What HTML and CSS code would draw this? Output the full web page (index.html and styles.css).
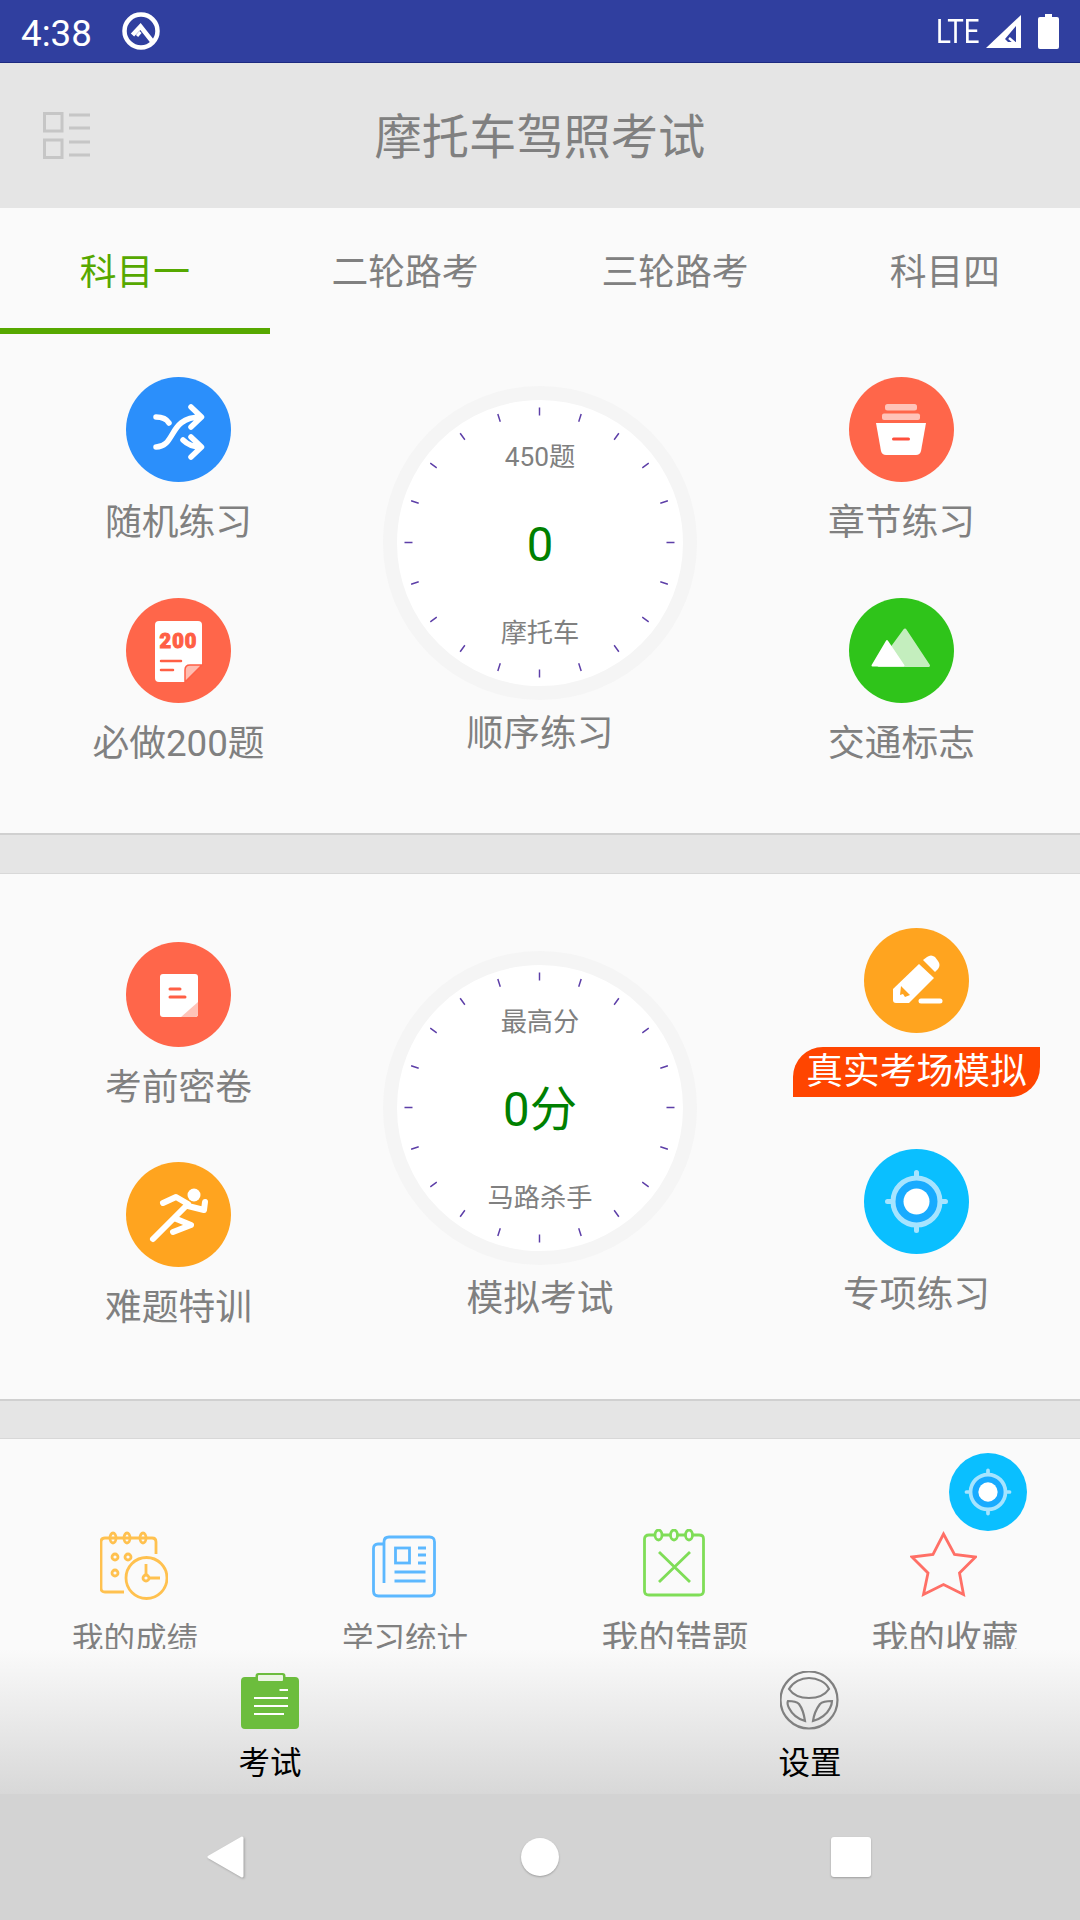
FILE: index.html
```html
<!DOCTYPE html>
<html lang="zh-CN">
<head>
  <meta charset="UTF-8">
  <meta name="viewport" content="width=device-width, initial-scale=1.0">
  <title>摩托车驾照考试</title>
  <link rel="stylesheet" href="styles.css">
</head>
<body>
  <svg class="defs" width="0" height="0">
    <symbol id="target" viewBox="0 0 105 105">
      <circle cx="52.5" cy="52.5" r="52.5" fill="#0abfff"/>
      <circle cx="52.5" cy="52.5" r="22" fill="#18abff"/>
      <circle cx="52.5" cy="52.5" r="23.500" fill="none" stroke="#a6e4ff" stroke-width="5"/>
      <path d="M52.5 23.500v3M52.5 78.500v3M23.500 52.5h3M78.500 52.5h3" stroke="#a6e4ff" stroke-width="5" stroke-linecap="round"/>
      <circle cx="52.5" cy="52.5" r="13" fill="#fff"/>
    </symbol>
  </svg>

  <div class="phone">
    <!-- Status bar -->
    <div class="status">
      <span class="time">4:38</span>
      <svg class="q-icon" viewBox="0 0 38 38" fill="none" stroke="#fff">
        <circle cx="19" cy="19" r="16.5" stroke-width="4.5"/>
        <path d="M10.500 23 18.500 14.500 31.500 31" stroke-width="4.500"/>
        <path d="M15 24 18.500 20" stroke-width="3"/>
      </svg>
      <span class="status-right">
        <span class="lte">LTE</span>
        <svg class="signal" viewBox="0 0 35 33">
          <path d="M0 33 35 0v33z" fill="#fff"/>
          <path d="M19 24 30 11v16H22z" fill="#303f9f"/>
          <path d="M23 23l7 6" stroke="#fff" stroke-width="2.500"/>
        </svg>
        <svg class="battery" viewBox="0 0 21 35">
          <path d="M7 0h7v3h5q2 0 2 2v28q0 2-2 2H2q-2 0-2-2V5q0-2 2-2h5z" fill="#fff"/>
        </svg>
      </span>
    </div>

    <!-- Title bar -->
    <div class="header">
      <svg class="menu-icon" viewBox="0 0 47 47" fill="none" stroke="#c6c6c6" stroke-width="3">
        <rect x="1.500" y="1.500" width="17.500" height="17.500"/>
        <rect x="1.500" y="28" width="17.500" height="17.500"/>
        <path d="M26 3h21M26 16h21M26 30h21M26 43h21"/>
      </svg>
      <h1>摩托车驾照考试</h1>
    </div>

    <div class="content">
      <div class="panel panel-a">
        <div class="tabs">
          <div class="tab active">科目一</div>
          <div class="tab">二轮路考</div>
          <div class="tab">三轮路考</div>
          <div class="tab">科目四</div>
        </div>
        <div class="panel-body">
          <div class="side">
            <div class="item">
              <svg class="round" viewBox="0 0 105 105">
                <circle cx="52.5" cy="52.5" r="52.5" fill="#2b8ffb"/>
                <g fill="none" stroke="#fff" stroke-width="5.500" stroke-linecap="round" stroke-linejoin="round">
                  <path d="M30 40c6 0 10 1 13 6M30 70c20 0 12-30 45-30M65 30l10.500 10L65 50"/>
                  <path d="M57 63c5 5 10 7 18 7M65 60l10.500 10L65 80"/>
                </g>
              </svg>
              <div class="label">随机练习</div>
            </div>
            <div class="item">
              <svg class="round" viewBox="0 0 105 105">
                <circle cx="52.5" cy="52.5" r="52.5" fill="#ff664a"/>
                <path d="M33 23h39q4 0 4 4v40L59 84H33q-4 0-4-4V27q0-4 4-4z" fill="#fff"/>
                <text class="doc-num" x="52.500" y="50">200</text>
                <path d="M35 63h20M35 72h12" stroke="#ff5f45" stroke-width="2.500" stroke-linecap="round"/>
                <path d="M59 84V72q0-5 5-5h12z" fill="#ffbcb0" stroke="#ff5f45" stroke-width="1.500"/>
              </svg>
              <div class="label">必做200题</div>
            </div>
          </div>
          <div class="middle">
            <div class="gauge">
              <svg class="ticks" viewBox="0 0 285 285">
                <circle cx="142.500" cy="142.500" r="131" pathLength="2000"/>
              </svg>
              <div class="gauge-small">450题</div>
              <div class="gauge-big">0</div>
              <div class="gauge-small">摩托车</div>
            </div>
            <div class="label">顺序练习</div>
          </div>
          <div class="side">
            <div class="item">
              <svg class="round" viewBox="0 0 105 105">
                <circle cx="52.5" cy="52.5" r="52.5" fill="#ff664a"/>
                <rect x="36" y="27" width="32" height="6.500" rx="2.500" fill="#ffc3b8"/>
                <rect x="33" y="36.500" width="38" height="6.500" rx="2" fill="#ffc3b8"/>
                <path d="M27 46h50l-5 28q-1 4-5 4H37q-4 0-5-4z" fill="#fff"/>
                <path d="M44.500 62h15" stroke="#ff4f3c" stroke-width="3" stroke-linecap="round"/>
              </svg>
              <div class="label">章节练习</div>
            </div>
            <div class="item">
              <svg class="round" viewBox="0 0 105 105">
                <circle cx="52.5" cy="52.5" r="52.5" fill="#2fc41a"/>
                <path d="M56 32 79.500 67.500H30z" fill="#c4eebe" stroke="#c4eebe" stroke-width="3" stroke-linejoin="round"/>
                <path d="M38 43 54.500 67.500h-31z" fill="#fff" stroke="#fff" stroke-width="2" stroke-linejoin="round"/>
              </svg>
              <div class="label">交通标志</div>
            </div>
          </div>
        </div>
      </div>

      <div class="panel panel-b">
        <div class="panel-body">
          <div class="side">
            <div class="item">
              <svg class="round" viewBox="0 0 105 105">
                <circle cx="52.5" cy="52.5" r="52.5" fill="#ff664a"/>
                <rect x="34" y="32" width="38" height="43" rx="3" fill="#fff"/>
                <path d="M72 60v12q0 3-3 3H55z" fill="#ffc3b8"/>
                <path d="M44 47h10M44 55h15" stroke="#ff5f45" stroke-width="3" stroke-linecap="round"/>
              </svg>
              <div class="label">考前密卷</div>
            </div>
            <div class="item">
              <svg class="round" viewBox="0 0 105 105">
                <circle cx="52.5" cy="52.5" r="52.5" fill="#ffa41f"/>
                <circle cx="68" cy="33" r="6.500" fill="#fff"/>
                <g fill="none" stroke="#fff" stroke-width="6" stroke-linecap="round" stroke-linejoin="round">
                  <path d="M37 41l13-6 12 7-14 14 17 7-18 7"/>
                  <path d="M62 44l16 4 1-8"/>
                  <path d="M46 58 27 77"/>
                </g>
              </svg>
              <div class="label">难题特训</div>
            </div>
          </div>
          <div class="middle">
            <div class="gauge">
              <svg class="ticks" viewBox="0 0 285 285">
                <circle cx="142.500" cy="142.500" r="131" pathLength="2000"/>
              </svg>
              <div class="gauge-small">最高分</div>
              <div class="gauge-big">0分</div>
              <div class="gauge-small">马路杀手</div>
            </div>
            <div class="label">模拟考试</div>
          </div>
          <div class="side side-right">
            <div class="item">
              <svg class="round" viewBox="0 0 105 105">
                <circle cx="52.5" cy="52.5" r="52.5" fill="#ffa41f"/>
                <path d="M29 61 55 36 70 50 45 75H32q-3 0-3-3z" fill="#fff"/>
                <path d="M59 32l4-3q4-3 8 0l3 4q3 4 0 8l-3 3z" fill="#fff"/>
                <path d="M37 58l9 9-5 2-2-3-3 1z" fill="#ffa41f"/>
                <path d="M57 73h19" stroke="#fff" stroke-width="5" stroke-linecap="round"/>
              </svg>
              <div class="label tag">真实考场模拟</div>
            </div>
            <div class="item">
              <svg class="round"><use href="#target"/></svg>
              <div class="label">专项练习</div>
            </div>
          </div>
        </div>
      </div>

      <div class="panel panel-c">
        <svg class="float-btn" viewBox="0 0 105 105"><use href="#target"/></svg>

        <div class="tool">
          <svg class="tool-icon" width="68" height="71" viewBox="0 -2 68 71" fill="none" stroke="#ffc14f" stroke-width="2.800">
            <path d="M24 61H5q-4 0-4-4V11q0-4 4-4h47q4 0 4 4v12M16 7h8M30 7h9"/>
            <ellipse cx="13" cy="7" rx="3" ry="5"/>
            <ellipse cx="27" cy="7" rx="3" ry="5"/>
            <ellipse cx="43" cy="7" rx="3" ry="5"/>
            <circle cx="15" cy="26" r="3"/>
            <circle cx="28" cy="26" r="3"/>
            <circle cx="15" cy="42" r="3"/>
            <circle cx="46.500" cy="47" r="20.500"/>
            <circle cx="46" cy="47" r="3"/>
            <path d="M46 33v11M49 47h11"/>
          </svg>
          <div class="label label-sm">我的成绩</div>
        </div>
        <div class="tool">
          <svg class="tool-icon" width="64" height="71" viewBox="0 -7 64 71" fill="none" stroke="#5cb8ff" stroke-width="2.800">
            <path d="M12 8H6q-4.500 0-4.500 4.500V55q0 5 5 5h51q5 0 5-5V6q0-5-5-5H17q-5 0-5 5v41"/>
            <rect x="23.500" y="12" width="14" height="15"/>
            <path d="M46 12h8M46 19h8M46 27h8M22.500 36h31M22.500 45h31"/>
          </svg>
          <div class="label label-sm">学习统计</div>
        </div>
        <div class="tool">
          <svg class="tool-icon" width="62" height="71" viewBox="0 0 62 71" fill="none" stroke="#7fdd57" stroke-width="2.800">
            <path d="M11 6H6Q1.500 6 1.500 10v52q0 4 4.500 4h50q4.500 0 4.500-4V10q0-4-4.500-4h-6M20 6h7M35 6h7"/>
            <ellipse cx="15.500" cy="6" rx="3.500" ry="5"/>
            <ellipse cx="31" cy="6" rx="3.500" ry="5"/>
            <ellipse cx="46" cy="6" rx="3.500" ry="5"/>
            <path d="M16 23 47 53M47 23 16 53"/>
          </svg>
          <div class="label">我的错题</div>
        </div>
        <div class="tool">
          <svg class="tool-icon" width="67" height="71" viewBox="0 -3 67 71" fill="none" stroke="#ff6f66" stroke-width="2.800">
            <path d="M33.500 2 44.500 22.500 65.500 25 49.500 41 53.500 62.500 33.500 52.500 13.500 62.500 18 41 2 25 23 22.500z"/>
          </svg>
          <div class="label">我的收藏</div>
        </div>
      </div>
    </div>

    <!-- Bottom tabs -->
    <div class="bottom">
      <div class="bottom-tab">
        <svg class="bottom-icon" width="58" height="60" viewBox="0 -2 58 60">
          <path d="M14.500 4V3q0-3 3-3h24q3 0 3 3v1H54q4 0 4 4v44q0 4-4 4H4q-4 0-4-4V8q0-4 4-4z" fill="#6cbd3d"/>
          <rect x="17" y="2" width="25" height="6" rx="1" fill="#eaf5e2"/>
          <path d="M38.500 17H47M13 25h34M13 33h34M13 41h30" stroke="#fff" stroke-width="2"/>
        </svg>
        <div class="bottom-label">考试</div>
      </div>
      <div class="bottom-tab">
        <svg class="bottom-icon" width="60" height="60" viewBox="1 1 60 60" fill="none" stroke="#808080" stroke-width="2.200">
          <circle cx="30" cy="30" r="28.500"/>
          <path d="M10 19c4-7 12-11 20-11s17 4 20 11c-4 6-12 9-20 9s-16-3-20-9z"/>
          <path d="M9 31c4 0 9 1 11 3 3 4 5 10 6 17-7-2-13-7-16-13-1-2-2-5-1-7z"/>
          <path d="M53 31c-4 0-10 1-12 3-3 4-6 10-7 17 7-2 14-7 17-13 1-2 2-5 2-7z"/>
        </svg>
        <div class="bottom-label">设置</div>
      </div>
    </div>

    <!-- Android nav buttons -->
    <div class="navbar">
      <svg class="nav-back" width="37" height="42" viewBox="0 0 37 42">
        <path d="M35 2 2 21l33 19z" fill="#fff" stroke="#fff" stroke-width="3" stroke-linejoin="round"/>
      </svg>
      <div class="nav-home"></div>
      <div class="nav-recent"></div>
    </div>
  </div>
</body>
</html>
```

FILE: styles.css
```css
* {
  box-sizing: border-box;
}
body {
  margin: 0;
  font-family: Roboto, "Noto Sans CJK SC", sans-serif;
  color: #808080;
}
.defs {
  position: absolute;
}
.phone {
  width: 1080px;
  height: 1920px;
  display: flex;
  flex-direction: column;
  overflow: hidden;
  background: #e5e5e5;
}

/* status bar */
.status {
  height: 63px;
  flex: none;
  display: flex;
  align-items: center;
  padding: 0 21px;
  background: #303f9f;
  border-bottom: 1px solid #1d2a80;
  color: #fff;
}
.time {
  font-size: 36.75px;
  width: 101px;
  padding-top: 4px;
}
.q-icon {
  width: 38px;
  height: 38px;
}
.status-right {
  margin-left: auto;
  display: flex;
  align-items: center;
}
.lte {
  font-size: 33px;
  width: 45px;
  display: inline-block;
  transform: scaleX(0.84);
  transform-origin: left center;
  margin-left: -1px;
  margin-right: 5px;
}
.signal {
  width: 35px;
  height: 33px;
  margin-right: 17px;
}
.battery {
  width: 21px;
  height: 35px;
}

/* title */
.header {
  height: 145px;
  flex: none;
  display: flex;
  align-items: center;
  justify-content: center;
  position: relative;
  padding-bottom: 5px;
  background: #e5e5e5;
}
.header h1 {
  margin: 0;
  font-size: 47.25px;
  font-weight: 400;
}
.menu-icon {
  position: absolute;
  left: 43px;
  top: 49px;
  width: 47px;
  height: 47px;
}

/* scrolling area, cut off by the bottom tabs */
.content {
  flex: 1;
  overflow: hidden;
}
.panel {
  background: #fafafa;
  border-bottom: 2px solid #d0d0d0;
}
.panel-a {
  height: 627px;
  margin-bottom: 38px;
}
.panel-b {
  height: 528px;
  margin-bottom: 37px;
  border-top: 1px solid #d8d8d8;
}
.panel-c {
  height: 400px;
  position: relative;
  display: grid;
  grid-template-columns: repeat(4, 270px);
  padding-top: 90px;
  border-top: 1px solid #d8d8d8;
}
.tabs {
  display: flex;
  height: 126px;
}
.tab {
  width: 270px;
  display: flex;
  align-items: center;
  justify-content: center;
  padding-bottom: 5px;
  font-size: 36.75px;
}
.tab.active {
  color: #56a800;
  box-shadow: inset 0 -6px 0 #56a800;
}
.panel-body {
  display: grid;
  grid-template-columns: 357px 366px 357px;
}
.side {
  display: flex;
  flex-direction: column;
  gap: 50px;
  padding-top: 43px;
}
.middle {
  display: flex;
  flex-direction: column;
  align-items: center;
  padding-top: 52px;
}
.panel-b .side {
  padding-top: 68px;
  gap: 49px;
}
.panel-b .middle {
  padding-top: 77px;
}
.panel-b .side-right {
  padding-top: 54px;
  padding-left: 30px;
  gap: 52px;
}
.item {
  display: flex;
  flex-direction: column;
  align-items: center;
}
.round {
  width: 105px;
  height: 105px;
  display: block;
}
.label {
  font-size: 36.75px;
  line-height: 50px;
  margin-top: 16px;
  white-space: nowrap;
}
.label-sm {
  font-size: 31.5px;
}
.label.tag {
  width: 247px;
  height: 50px;
  margin-top: 14px;
  text-align: center;
  color: #fff;
  background: #ff4500;
  border-radius: 30px 0 30px 0;
}
.doc-num {
  font-size: 20px;
  font-weight: 900;
  text-anchor: middle;
  fill: #ff5f45;
  letter-spacing: 1px;
  stroke: #ff5f45;
  stroke-width: 1px;
}

/* round dial */
.gauge {
  width: 314px;
  height: 314px;
  position: relative;
  display: grid;
  grid-template-rows: repeat(3, 88px);
  align-content: center;
  justify-items: center;
  align-items: center;
  padding-top: 4px;
  background: #fff;
  border: 14.5px solid #f5f5f5;
  border-radius: 50%;
}
.ticks {
  position: absolute;
  left: 0;
  top: 0;
  width: 285px;
  height: 285px;
}
.ticks circle {
  fill: none;
  stroke: #5d3fa8;
  stroke-width: 8;
  stroke-dasharray: 3.6 96.4;
  stroke-dashoffset: 1.8;
}
.gauge + .label {
  margin-top: 9px;
}
.gauge-small {
  font-size: 26.25px;
  line-height: 36px;
}
.gauge-big {
  font-size: 47.25px;
  line-height: 60px;
  color: #008000;
}

/* row of tools */
.tool {
  display: flex;
  flex-direction: column;
  align-items: center;
}
.tool-icon {
  display: block;
  margin-right: 3px;
}
.tool .label {
  margin-top: 15px;
}
.float-btn {
  position: absolute;
  top: 14px;
  right: 53px;
  width: 78px;
  height: 78px;
}

/* bottom tabs */
.bottom {
  height: 145px;
  flex: none;
  display: grid;
  grid-template-columns: 1fr 1fr;
  background: linear-gradient(#fafafa, #d8d8d8);
}
.bottom-tab {
  display: flex;
  flex-direction: column;
  align-items: center;
  padding-top: 22px;
}
.bottom-label {
  font-size: 31.5px;
  line-height: 40px;
  margin-top: 13px;
  color: #000;
}

/* nav bar */
.navbar {
  height: 126px;
  flex: none;
  display: flex;
  align-items: center;
  padding-left: 207px;
  background: #d3d3d3;
}
.nav-back {
  filter: drop-shadow(1px 1px 1px rgba(0, 0, 0, 0.25));
}
.nav-home {
  width: 38px;
  height: 38px;
  margin-left: 277px;
  border-radius: 50%;
  background: #fff;
  box-shadow: 0 1px 2px rgba(0, 0, 0, 0.25);
}
.nav-recent {
  width: 40px;
  height: 40px;
  margin-left: 272px;
  border-radius: 3px;
  background: #fff;
  box-shadow: 0 1px 2px rgba(0, 0, 0, 0.25);
}
```
